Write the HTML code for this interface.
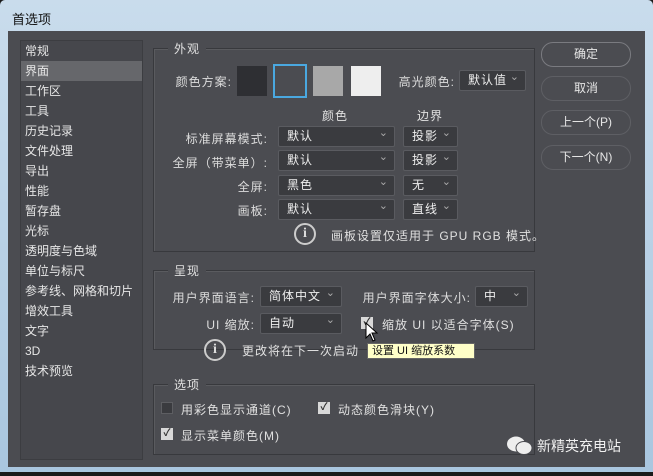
<!DOCTYPE html><html><head><meta charset="utf-8"><style>
*{box-sizing:border-box;margin:0;padding:0}
body{width:653px;height:476px;overflow:hidden;background:#1a1a1a;font-family:"Liberation Sans","Noto Sans CJK SC",sans-serif;font-size:12px;color:#e0e0e0;position:relative}
.a{position:absolute}
.win{left:0;top:0;width:653px;height:472px;background:linear-gradient(#c9dcec,#a9c6df);border-radius:5px 5px 0 0}
.body{left:8px;top:31px;width:637px;height:436px;background:#4b4c51}
.list{left:20px;top:40px;width:123px;height:420px;background:#46474c;border:1px solid #3c3d41}
.list div{height:20px;line-height:20px;padding-left:4px;font-size:12px;color:#e6e6e6}
.list .sel{background:#66676b}
.grp{border:1px solid #38393d;box-shadow:inset 1px 1px 0 #5a5b5f}
.lg{background:#4b4c51;padding:0 6px;font-size:12px}
.sel2{background:#3a3b3f;border:1px solid #5a5b60;border-radius:2px;height:21px;line-height:19px;padding-left:8px;font-size:12px;color:#eee;letter-spacing:1px}
.sel2:after{content:"⌄";position:absolute;right:5px;top:-3px;color:#aaa;font-size:11px}
.lb{text-align:right;font-size:12px;color:#ddd;letter-spacing:1px}
.btn{left:541px;width:90px;height:25px;border:1px solid #7a7b80;border-radius:12px;text-align:center;line-height:23px;font-size:12px;color:#e6e6e6}
.cb{width:12px;height:12px;background:#3a3b3f;border:1px solid #5d5e62}
.cb.on{background:#d8d8d8;border-color:#d8d8d8;color:#333;font-size:10px;line-height:10px;text-align:center;font-weight:bold}
.info{width:22px;height:22px;border:2px solid #ccc;border-radius:50%;text-align:center;line-height:18px;font-weight:bold;color:#ddd;font-size:14px;font-family:"Liberation Serif",serif}
.t{letter-spacing:1px}
</style></head><body>
<div class="a win"></div>
<div class="a" style="left:12px;top:9px;color:#111;font-size:13px">首选项</div>
<div class="a body"></div>
<div class="a list"><div>常规</div><div class="sel">界面</div><div>工作区</div><div>工具</div><div>历史记录</div><div>文件处理</div><div>导出</div><div>性能</div><div>暂存盘</div><div>光标</div><div>透明度与色域</div><div>单位与标尺</div><div>参考线、网格和切片</div><div>增效工具</div><div>文字</div><div>3D</div><div>技术预览</div></div>

<div class="a grp" style="left:153px;top:48px;width:382px;height:204px"></div>
<div class="a lg t" style="left:168px;top:40px">外观</div>
<div class="a lb" style="left:150px;top:73px;width:82px">颜色方案:</div>
<div class="a" style="left:237px;top:66px;width:30px;height:30px;background:#2e2f33"></div>
<div class="a" style="left:273px;top:64px;width:34px;height:34px;border:2px solid #4aa8e0;background:#4b4c51"></div>
<div class="a" style="left:313px;top:66px;width:30px;height:30px;background:#a8a8a8"></div>
<div class="a" style="left:351px;top:66px;width:30px;height:30px;background:#eeeeee"></div>
<div class="a lb" style="left:380px;top:73px;width:75px">高光颜色:</div>
<div class="a sel2" style="left:459px;top:70px;width:67px">默认值</div>
<div class="a t" style="left:322px;top:107px">颜色</div>
<div class="a t" style="left:417px;top:107px">边界</div>
<div class="a lb" style="left:150px;top:130px;width:118px">标准屏幕模式:</div>
<div class="a sel2" style="left:278px;top:126px;width:117px">默认</div>
<div class="a sel2" style="left:403px;top:126px;width:55px">投影</div>
<div class="a lb" style="left:150px;top:154px;width:118px">全屏（带菜单）:</div>
<div class="a sel2" style="left:278px;top:150px;width:117px">默认</div>
<div class="a sel2" style="left:403px;top:150px;width:55px">投影</div>
<div class="a lb" style="left:150px;top:178px;width:118px">全屏:</div>
<div class="a sel2" style="left:278px;top:175px;width:117px">黑色</div>
<div class="a sel2" style="left:403px;top:175px;width:55px">无</div>
<div class="a lb" style="left:150px;top:202px;width:118px">画板:</div>
<div class="a sel2" style="left:278px;top:199px;width:117px">默认</div>
<div class="a sel2" style="left:403px;top:199px;width:55px">直线</div>
<div class="a info" style="left:294px;top:223px">i</div>
<div class="a t" style="left:331px;top:227px">画板设置仅适用于 GPU RGB 模式。</div>

<div class="a grp" style="left:153px;top:270px;width:382px;height:80px"></div>
<div class="a lg t" style="left:168px;top:262px">呈现</div>
<div class="a lb" style="left:150px;top:289px;width:105px">用户界面语言:</div>
<div class="a sel2" style="left:260px;top:286px;width:82px">简体中文</div>
<div class="a lb" style="left:345px;top:289px;width:126px">用户界面字体大小:</div>
<div class="a sel2" style="left:475px;top:286px;width:53px">中</div>
<div class="a lb" style="left:150px;top:316px;width:105px">UI 缩放:</div>
<div class="a sel2" style="left:260px;top:313px;width:82px">自动</div>
<div class="a cb on" style="left:361px;top:317px">✓</div>
<div class="a t" style="left:382px;top:316px">缩放 UI 以适合字体(S)</div>
<div class="a info" style="left:204px;top:339px">i</div>
<div class="a t" style="left:242px;top:342px">更改将在下一次启动</div>
<div class="a" style="left:367px;top:343px;width:108px;height:16px;background:#ffffc8;border:1px solid #666;color:#111;font-size:11px;line-height:14px;padding-left:4px">设置 UI 缩放系数</div>
<svg class="a" style="left:365px;top:322px" width="14" height="22"><path d="M1 1 L1 16 L5 12 L8 19 L10 18 L7 11 L12 11 Z" fill="#fff" stroke="#000" stroke-width="1"/></svg>

<div class="a grp" style="left:153px;top:384px;width:382px;height:71px"></div>
<div class="a lg t" style="left:168px;top:376px">选项</div>
<div class="a cb" style="left:161px;top:402px"></div>
<div class="a t" style="left:181px;top:401px">用彩色显示通道(C)</div>
<div class="a cb on" style="left:318px;top:402px">✓</div>
<div class="a t" style="left:338px;top:401px">动态颜色滑块(Y)</div>
<div class="a cb on" style="left:161px;top:428px">✓</div>
<div class="a t" style="left:181px;top:427px">显示菜单颜色(M)</div>

<div class="a btn" style="top:42px">确定</div>
<div class="a btn" style="top:76px;border-color:#5e5f64">取消</div>
<div class="a btn" style="top:110px;border-color:#5e5f64">上一个(P)</div>
<div class="a btn" style="top:145px;border-color:#5e5f64">下一个(N)</div>

<svg class="a" style="left:505px;top:435px" width="30" height="20"><ellipse cx="11" cy="9" rx="9" ry="7.5" fill="#eee"/><ellipse cx="19" cy="13" rx="8" ry="6.5" fill="#eee" stroke="#4b4c51"/></svg>
<div class="a" style="left:537px;top:436px;font-size:14px;color:#f0f0f0">新精英充电站</div>
</body></html>
